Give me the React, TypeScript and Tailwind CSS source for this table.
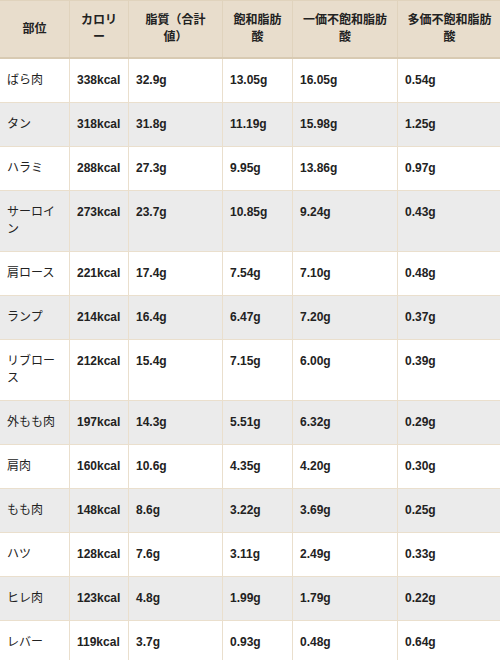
const headers = ["部位", "カロリー", "脂質（合計値）", "飽和脂肪酸", "一価不飽和脂肪酸", "多価不飽和脂肪酸"];

const rows = [
  ["ばら肉", "338kcal", "32.9g", "13.05g", "16.05g", "0.54g"],
  ["タン", "318kcal", "31.8g", "11.19g", "15.98g", "1.25g"],
  ["ハラミ", "288kcal", "27.3g", "9.95g", "13.86g", "0.97g"],
  ["サーロイン", "273kcal", "23.7g", "10.85g", "9.24g", "0.43g"],
  ["肩ロース", "221kcal", "17.4g", "7.54g", "7.10g", "0.48g"],
  ["ランプ", "214kcal", "16.4g", "6.47g", "7.20g", "0.37g"],
  ["リブロース", "212kcal", "15.4g", "7.15g", "6.00g", "0.39g"],
  ["外もも肉", "197kcal", "14.3g", "5.51g", "6.32g", "0.29g"],
  ["肩肉", "160kcal", "10.6g", "4.35g", "4.20g", "0.30g"],
  ["もも肉", "148kcal", "8.6g", "3.22g", "3.69g", "0.25g"],
  ["ハツ", "128kcal", "7.6g", "3.11g", "2.49g", "0.33g"],
  ["ヒレ肉", "123kcal", "4.8g", "1.99g", "1.79g", "0.22g"],
  ["レバー", "119kcal", "3.7g", "0.93g", "0.48g", "0.64g"],
];

const colWidths = ["w-[70px]", "w-[59px]", "w-[94px]", "w-[70px]", "w-[105px]", "w-[104px]"];

export default function App() {
  return (
    <div className="w-[500px] h-[660px] overflow-hidden bg-white">
      <table
        className="-ml-px w-[502px] table-fixed border-collapse text-[12px] leading-[17px] text-[#222] [text-spacing-trim:space-all]"
        style={{ fontFamily: '"Liberation Sans", Arial, "Noto Sans CJK JP", sans-serif' }}
      >
        <colgroup>
          {colWidths.map((w, i) => (
            <col key={i} className={w} />
          ))}
        </colgroup>
        <thead>
          <tr className="bg-[#e8ddcc]">
            {headers.map((h) => (
              <th
                key={h}
                className="border border-[#e0d3bd] border-b-2 border-b-[#d8cab2] px-[7px] py-[11px] text-center font-bold align-middle"
              >
                {h}
              </th>
            ))}
          </tr>
        </thead>
        <tbody>
          {rows.map((r, i) => (
            <tr key={r[0]} className={i % 2 === 1 ? "bg-[#ebebeb]" : "bg-white"}>
              {r.map((c, j) => (
                <td
                  key={j}
                  className={`border border-[#eadfcd] px-[7px] py-[13px] text-left align-top ${
                    j === 0 ? "font-normal" : "font-bold"
                  }`}
                >
                  {c}
                </td>
              ))}
            </tr>
          ))}
        </tbody>
      </table>
    </div>
  );
}
